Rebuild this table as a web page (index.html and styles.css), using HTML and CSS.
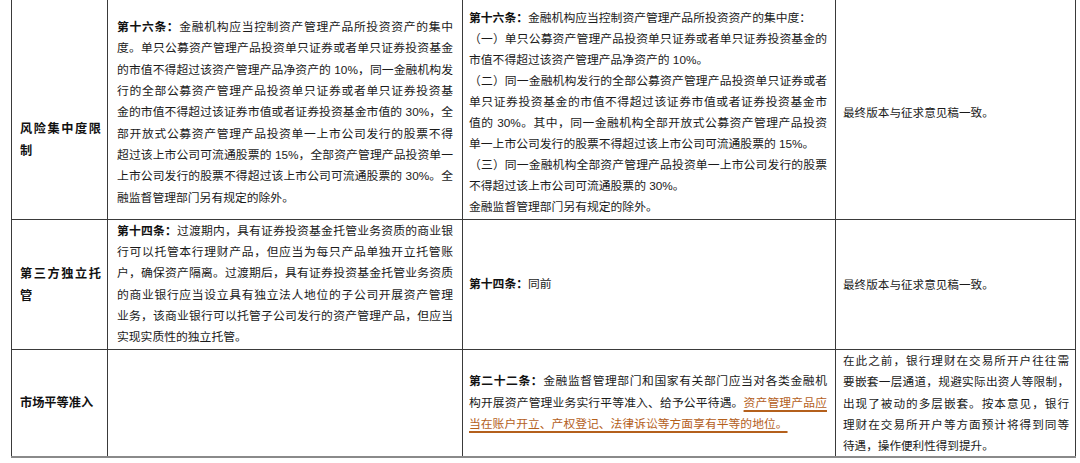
FILE: index.html
```html
<!DOCTYPE html>
<html lang="zh-CN">
<head>
<meta charset="utf-8">
<title>资管新规对比</title>
<link rel="stylesheet" href="styles.css">
</head>
<body>
<table class="cmp">
  <colgroup>
    <col class="c1"><col class="c2"><col class="c3"><col class="c4">
  </colgroup>
  <tr class="r1">
    <td class="lbl lbl-r1">风险集中度限制</td>
    <td class="txt t2 sh">
      <div class="ln"><b>第十六条：</b>金融机构应当控制资产管理产品所投资资产的集中</div>
      <div class="ln">度。单只公募资产管理产品投资单只证券或者单只证券投资基金</div>
      <div class="ln">的市值不得超过该资产管理产品净资产的 10%，同一金融机构发</div>
      <div class="ln">行的全部公募资产管理产品投资单只证券或者单只证券投资基</div>
      <div class="ln">金的市值不得超过该证券市值或者证券投资基金市值的 30%，全</div>
      <div class="ln">部开放式公募资产管理产品投资单一上市公司发行的股票不得</div>
      <div class="ln">超过该上市公司可流通股票的 15%，全部资产管理产品投资单一</div>
      <div class="ln">上市公司发行的股票不得超过该上市公司可流通股票的 30%。全</div>
      <div class="ln end">融监督管理部门另有规定的除外。</div>
    </td>
    <td class="txt t3 sh tight">
      <div class="ln end"><b>第十六条：</b>金融机构应当控制资产管理产品所投资资产的集中度：</div>
      <div class="ln">（一）单只公募资产管理产品投资单只证券或者单只证券投资基金的</div>
      <div class="ln end">市值不得超过该资产管理产品净资产的 10%。</div>
      <div class="ln">（二）同一金融机构发行的全部公募资产管理产品投资单只证券或者</div>
      <div class="ln">单只证券投资基金的市值不得超过该证券市值或者证券投资基金市</div>
      <div class="ln">值的 30%。其中，同一金融机构全部开放式公募资产管理产品投资</div>
      <div class="ln end">单一上市公司发行的股票不得超过该上市公司可流通股票的 15%。</div>
      <div class="ln">（三）同一金融机构全部资产管理产品投资单一上市公司发行的股票</div>
      <div class="ln end">不得超过该上市公司可流通股票的 30%。</div>
      <div class="ln end">金融监督管理部门另有规定的除外。</div>
    </td>
    <td class="txt t4 sh">
      <div class="ln end">最终版本与征求意见稿一致。</div>
    </td>
  </tr>
  <tr class="r2">
    <td class="lbl">第三方独立托管</td>
    <td class="txt t2">
      <div class="ln"><b>第十四条：</b>过渡期内，具有证券投资基金托管业务资质的商业银</div>
      <div class="ln">行可以托管本行理财产品，但应当为每只产品单独开立托管账</div>
      <div class="ln">户，确保资产隔离。过渡期后，具有证券投资基金托管业务资质</div>
      <div class="ln">的商业银行应当设立具有独立法人地位的子公司开展资产管理</div>
      <div class="ln">业务，该商业银行可以托管子公司发行的资产管理产品，但应当</div>
      <div class="ln end">实现实质性的独立托管。</div>
    </td>
    <td class="txt t3">
      <div class="ln end"><b>第十四条：</b>同前</div>
    </td>
    <td class="txt t4">
      <div class="ln end">最终版本与征求意见稿一致。</div>
    </td>
  </tr>
  <tr class="r3">
    <td class="lbl">市场平等准入</td>
    <td class="txt t2"></td>
    <td class="txt t3">
      <div class="ln"><b>第二十二条：</b>金融监督管理部门和国家有关部门应当对各类金融机</div>
      <div class="ln">构开展资产管理业务实行平等准入、给予公平待遇。<span class="hl">资产管理产品应</span></div>
      <div class="ln end"><span class="hl">当在账户开立、产权登记、法律诉讼等方面享有平等的地位。</span></div>
    </td>
    <td class="txt t4">
      <div class="ln">在此之前，银行理财在交易所开户往往需</div>
      <div class="ln">要嵌套一层通道，规避实际出资人等限制，</div>
      <div class="ln">出现了被动的多层嵌套。按本意见，银行</div>
      <div class="ln">理财在交易所开户等方面预计将得到同等</div>
      <div class="ln end">待遇，操作便利性得到提升。</div>
    </td>
  </tr>
</table>
</body>
</html>
```

FILE: styles.css
```css
html, body {
  margin: 0;
  padding: 0;
  background: #ffffff;
}

body {
  font-family: "Liberation Sans", "Noto Sans CJK SC", sans-serif;
  font-size: 11.8px;
  color: #1a1a1a;
}

.cmp {
  border-collapse: collapse;
  table-layout: fixed;
  width: 1064px;
  margin: -4px 0 0 11px;
}

.c1 { width: 96px; }
.c2 { width: 355px; }
.c3 { width: 373px; }
.c4 { width: 240px; }

.cmp td {
  border: 1px solid #3a3a3a;
  vertical-align: middle;
  padding: 0;
}

.r1 { height: 223px; }
.r2 { height: 130px; }
.r3 { height: 107px; }

.cmp tr.r3 td { border-bottom-color: #8a8a8a; border-bottom-width: 2px; }

.cmp td.lbl {
  font-weight: bold;
  font-size: 12.2px;
  line-height: 22px;
  padding: 0 6px 0 8px;
  text-align: justify;
  color: #111;
}

.cmp td.lbl-r1 { padding-top: 64px; }

.txt { line-height: 21.3px; }
.tight { line-height: 21px; }

.cmp td.t2 { padding-left: 9px; padding-right: 9px; }
.cmp td.t3 { padding-left: 6px; padding-right: 8px; }
.cmp td.t4 { padding-left: 7px; padding-right: 6px; }

.cmp td.sh { padding-top: 10px; }

.ln {
  text-align: justify;
  text-align-last: justify;
}

.t4 .ln { font-size: 11.6px; }

.ln.end {
  text-align-last: auto;
  text-align: left;
}

.ln b {
  font-weight: bold;
  color: #111;
}

.hl {
  color: #b4601c;
  text-decoration: underline;
  text-decoration-color: #b4601c;
  text-decoration-thickness: 1.5px;
  text-underline-offset: 3px;
}
```
